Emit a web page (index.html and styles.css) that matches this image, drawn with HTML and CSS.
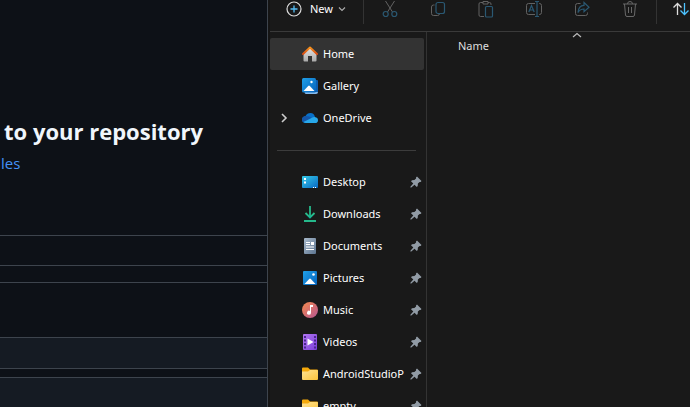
FILE: index.html
```html
<!DOCTYPE html>
<html lang="en">
<head>
<meta charset="utf-8">
<title>Upload files</title>
<link rel="stylesheet" href="styles.css">
</head>
<body>
<svg class="defs" aria-hidden="true">
  <defs>
    <linearGradient id="roof" x2="0" y2="1"><stop stop-color="#f7941d"/><stop offset="1" stop-color="#d84a12"/></linearGradient>
    <linearGradient id="wall" x2="0" y2="1"><stop stop-color="#e2e2e2"/><stop offset="1" stop-color="#a9a9a9"/></linearGradient>
    <linearGradient id="blue" x2="1" y2="1"><stop stop-color="#20a0e8"/><stop offset="1" stop-color="#0563bd"/></linearGradient>
    <linearGradient id="teal" x2="1" y2="1"><stop stop-color="#35cbe8"/><stop offset="1" stop-color="#0968c4"/></linearGradient>
    <linearGradient id="green" x2="0" y2="1"><stop stop-color="#2fbd85"/><stop offset="1" stop-color="#12b59b"/></linearGradient>
    <linearGradient id="paper" x2="1" y2="1"><stop stop-color="#a9bacb"/><stop offset="1" stop-color="#5d7591"/></linearGradient>
    <linearGradient id="music" x2="1" y2="1"><stop stop-color="#f58a4c"/><stop offset="1" stop-color="#b55594"/></linearGradient>
    <linearGradient id="video" x2="1" y2="1"><stop stop-color="#b276f3"/><stop offset="1" stop-color="#7b3fd6"/></linearGradient>
    <linearGradient id="folder" x2="1" y2="1"><stop stop-color="#ffe394"/><stop offset="1" stop-color="#fcc43a"/></linearGradient>
    <symbol id="pin" viewBox="0 0 12 12"><path fill="#919ba5" d="M7 .5 11.500 5 10.600 6 9.600 5.900 7.900 7.600 7.700 10 6.800 11 4.500 8.700 1.300 11.600.4 11.600.4 10.700 3.300 7.500 1 5.200 2 4.300 4.400 4.100 6.100 2.400 6 1.400Z"/></symbol>
    <symbol id="folder-icon" viewBox="0 0 16 16"><path fill="#f5a90b" d="M0 2.500Q0 1.500 1 1.500H6L8 3.500H15Q16 3.500 16 4.500V8H0Z"/><path fill="url(#folder)" d="M0 5.500H6L8 4H15Q16 4 16 5V13Q16 14 15 14H1Q0 14 0 13Z"/></symbol>
  </defs>
</svg>
<div class="desktop">
  <main class="upload">
    <section class="drop">
      <h1>to your repository</h1>
      <a href="#">les</a>
    </section>
    <div class="band"></div>
    <div class="band form"></div>
    <div class="band option"></div>
    <div class="band option last"></div>
  </main>
  <section class="explorer">
    <header class="toolbar">
      <button class="new"><svg width="16" height="16" viewBox="0 0 16 16" fill="none"><circle cx="8" cy="8" r="7" stroke="#ddd" stroke-width="1.200"/><path d="M8 4.500V11.500M4.500 8H11.500" stroke="#55bdf5" stroke-width="1.300"/></svg><span>New</span><svg width="8" height="8" viewBox="0 0 8 8" fill="none"><path d="M1 2.500 4 5.500 7 2.500" stroke="#aaa" stroke-width="1.200"/></svg></button>
      <span class="split"></span>
      <button class="tool" aria-label="Cut"><svg viewBox="0 0 16 18" fill="none"><path d="M3.500 1 10.500 12M12.500 1 5.500 12" stroke="#626262"/><circle cx="3.700" cy="14" r="2.500" stroke="#2a5872" stroke-width="1.200"/><circle cx="12.300" cy="14" r="2.500" stroke="#2a5872" stroke-width="1.200"/></svg></button>
      <button class="tool" aria-label="Copy"><svg viewBox="0 0 16 18" fill="none"><path d="M4.500 5H3.500Q1.500 5 1.500 7V13.500Q1.500 15.500 3.500 15.500H7.500Q9.500 15.500 9.500 13.500" stroke="#626262"/><rect x="6" y="2.500" width="8.500" height="11" rx="2" stroke="#2a5872" stroke-width="1.200"/></svg></button>
      <button class="tool" aria-label="Paste"><svg viewBox="0 0 16 18" fill="none"><path d="M5 2.500H2.500Q1 2.500 1 4V15Q1 16.500 2.500 16.500H6M10 2.500H11.500Q13 2.500 13 4V5M5 1.500H10V4H5Z" stroke="#626262"/><rect x="7.500" y="6.500" width="7" height="10.500" rx="1" stroke="#2a5872" stroke-width="1.200"/></svg></button>
      <button class="tool" aria-label="Rename"><svg viewBox="0 0 16 18" fill="none"><path d="M9 3.500H2.500Q.5 3.500.5 5.500V12.500Q.5 14.500 2.500 14.500H9M13 3.500H13.500Q15.500 3.500 15.500 5.500V12.500Q15.500 14.500 13.500 14.500H13" stroke="#626262"/><path d="M2.800 12 5.500 5.500 8.200 12M3.700 10H7.300M9 1.500H13M11 1.500V16.500M9 16.500H13" stroke="#2a5872" stroke-width="1.200"/></svg></button>
      <button class="tool" aria-label="Share"><svg viewBox="0 0 16 18" fill="none"><path d="M6.500 3.500H3.500Q1.500 3.500 1.500 5.500V13.500Q1.500 15.500 3.500 15.500H11.500Q13.500 15.500 13.500 13.500V12.500" stroke="#626262"/><path d="M10 2.500 15 7.200 10 11.700V9Q6 9 4 12.500 4.500 5.500 10 5.300Z" stroke="#2a5872" stroke-width="1.200"/></svg></button>
      <button class="tool" aria-label="Delete"><svg viewBox="0 0 16 18" fill="none"><path d="M1 4H15M5.500 4Q5.500 1.500 8 1.500T10.500 4M2.500 4 3.500 15Q3.700 16.500 5 16.500H11Q12.300 16.500 12.500 15L13.500 4M6.500 7V13M9.500 7V13" stroke="#686868"/></svg></button>
      <span class="split"></span>
      <button class="tool sort" aria-label="Sort"><svg viewBox="0 0 16 18" fill="none"><path d="M4.500 15V3.500M.5 7.500 4.500 3.500 8.500 7.500" stroke="#ddd" stroke-width="1.300"/><path d="M11.500 3V14.500M7.500 10.500 11.500 14.500 15.500 10.500" stroke="#4cc2ff" stroke-width="1.300"/></svg></button>
    </header>
    <div class="content">
      <nav class="side">
        <a class="row current" href="#"><svg class="icon" viewBox="0 0 16 16"><path fill="url(#wall)" d="M1.500 7.500 8 2 14.500 7.500V14.500Q14.500 15.500 13.500 15.500H10V10H6V15.500H2.500Q1.500 15.500 1.500 14.500Z"/><path fill="none" stroke="url(#roof)" stroke-width="2" stroke-linecap="round" stroke-linejoin="round" d="M1 8 8 1.500 15 8"/></svg><span>Home</span></a>
        <a class="row" href="#"><svg class="icon" viewBox="0 0 16 16"><path fill="#0d5eb0" d="M14 2H15Q16 2 16 3V14H14Z"/><path fill="#85b9ea" d="M2.500 14H16Q16 16 14 16H4Q2.500 16 2.500 14Z"/><rect width="14" height="14.500" rx="1.500" fill="url(#blue)"/><path fill="#fff" d="M1.500 13 6.200 8Q7 7.200 7.800 8L12.500 13Z"/><circle cx="9.500" cy="4" r="1.200" fill="#fff"/></svg><span>Gallery</span></a>
        <a class="row" href="#"><svg class="chevron" viewBox="0 0 8 10" fill="none"><path d="M2 1 6 5 2 9" stroke="#ccc" stroke-width="1.600"/></svg><svg class="icon" viewBox="0 0 16 16"><path fill="#0870c8" d="M4 13Q0 13 0 9.500 0 6.500 3.500 6 5 3 8.500 3 12 3 13 7L10 12Z"/><path fill="#1556a8" d="M3.500 6Q7 5.800 10 8L6 11 1 12Q0 11 0 9.500 0 6.500 3.500 6Z"/><path fill="#28a8ea" d="M1.500 12 8.500 8.500Q10.500 6.800 12.800 7 16 7.500 16 10.200 16 13 13 13H4Q2.500 13 1.500 12Z"/></svg><span>OneDrive</span></a>
        <hr>
        <a class="row" href="#"><svg class="icon" viewBox="0 0 16 16"><rect y="2" width="16" height="12" rx="1" fill="url(#teal)"/><path fill="#fff" d="M2 4H4V6H2ZM2 7.500H4V9.500H2ZM11 13H12V14H11ZM13 13H14V14H13Z"/></svg><span>Desktop</span><svg class="pin"><use href="#pin"/></svg></a>
        <a class="row" href="#"><svg class="icon" viewBox="0 0 16 16"><path fill="none" stroke="url(#green)" stroke-width="1.800" d="M3.500 7 8 11.500 12.500 7"/><path fill="#25b98b" d="M7.100 0H8.900V11H7.100ZM2 14H14V16H2Z"/></svg><span>Downloads</span><svg class="pin"><use href="#pin"/></svg></a>
        <a class="row" href="#"><svg class="icon" viewBox="0 0 16 16"><rect x="2" width="12" height="16" rx="1" fill="url(#paper)"/><path fill="#fff" d="M4 4H8V5H4ZM4 6H8V7H4ZM9 4H12V7H9ZM4 8.500H12V9.500H4ZM4 11H12V12H4Z"/></svg><span>Documents</span><svg class="pin"><use href="#pin"/></svg></a>
        <a class="row" href="#"><svg class="icon" viewBox="0 0 16 16"><rect x="1" y="1" width="14" height="14" rx="1" fill="url(#blue)"/><path fill="#fff" d="M2.500 14 7.200 9Q8 8.200 8.800 9L13.500 14Z"/><circle cx="11.500" cy="4.500" r="1.300" fill="#fff"/></svg><span>Pictures</span><svg class="pin"><use href="#pin"/></svg></a>
        <a class="row" href="#"><svg class="icon" viewBox="0 0 16 16"><circle cx="8" cy="8" r="8" fill="url(#music)"/><path fill="#fff" d="M8 3H11V5H9V10.500A2 2 0 1 1 8 9Z"/></svg><span>Music</span><svg class="pin"><use href="#pin"/></svg></a>
        <a class="row" href="#"><svg class="icon" viewBox="0 0 16 16"><rect x="1" width="14" height="16" rx="1" fill="url(#video)"/><path fill="#4b2790" d="M2 2H4V4H2ZM2 5.500H4V7.500H2ZM2 9H4V11H2ZM2 12.500H4V14.500H2ZM12 2H14V4H12ZM12 5.500H14V7.500H12ZM12 9H14V11H12ZM12 12.500H14V14.500H12Z"/><path fill="#fff" d="M5.500 4.500 11.500 8 5.500 11.500Z"/></svg><span>Videos</span><svg class="pin"><use href="#pin"/></svg></a>
        <a class="row" href="#"><svg class="icon"><use href="#folder-icon"/></svg><span>AndroidStudioP</span><svg class="pin"><use href="#pin"/></svg></a>
        <a class="row" href="#"><svg class="icon"><use href="#folder-icon"/></svg><span>empty</span><svg class="pin"><use href="#pin"/></svg></a>
      </nav>
      <div class="files">
        <svg class="caret" viewBox="0 0 10 6" fill="none"><path d="M1 5 5 1.500 9 5" stroke="#bbb" stroke-width="1.200"/></svg>
        <button class="column">Name</button>
      </div>
    </div>
  </section>
</div>
</body>
</html>
```
FILE: styles.css
```css
* {
  box-sizing: border-box;
}

body {
  margin: 0;
  overflow: hidden;
  background: #191919;
  color: #fff;
  font: 11px/16px "Noto Sans", "Open Sans", sans-serif;
}

a {
  color: inherit;
  text-decoration: none;
}

button {
  padding: 0;
  border: 0;
  background: none;
  color: inherit;
  font: inherit;
}

svg {
  display: block;
  flex: none;
}

.defs {
  position: absolute;
  width: 0;
  height: 0;
}

.desktop {
  display: grid;
  grid-template-columns: minmax(0, 268fr) minmax(0, 422fr);
  height: 100vh;
  overflow: hidden;
}

.upload {
  display: flex;
  flex-direction: column;
  border-right: 1px solid #3d444d;
  background: #0d1117;
}

.drop {
  flex: none;
  padding: 115px 0 60px 4px;
}

.drop h1 {
  margin: 0;
  color: #f0f6fc;
  font-family: "Open Sans", "Noto Sans", sans-serif;
  font-size: 22px;
  font-weight: 700;
  line-height: 32px;
  white-space: nowrap;
}

.drop a {
  display: block;
  margin-left: -4px;
  padding-left: 1px;
  color: #4493f8;
  font-family: "Open Sans", "Noto Sans", sans-serif;
  font-size: 15px;
  line-height: 32px;
  margin-bottom: -4px;
}

.band {
  flex: none;
  height: 31px;
  border: solid #3d444d;
  border-width: 1px 0;
}

.form {
  height: 55px;
  margin-top: 16px;
  border-bottom: 0;
}

.option {
  height: 32px;
  background: #151b23;
}

.last {
  flex: 1;
  margin-top: 8px;
  border-bottom: 0;
}

.explorer {
  display: flex;
  flex-direction: column;
  min-width: 0;
  min-height: 0;
  border-left: 2px solid #151515;
}

.toolbar {
  display: flex;
  flex: none;
  align-items: flex-start;
  height: 32px;
  overflow: hidden;
  border-bottom: 1px solid #3a3a3a;
}

.new {
  display: flex;
  flex: none;
  align-items: center;
  width: 93px;
  height: 18px;
  padding-left: 16px;
}

.new span {
  margin: 0 5px 0 8px;
}

.split {
  flex: none;
  width: 1px;
  height: 24px;
  margin-right: 2px;
  background: #333;
}

.tool {
  display: flex;
  flex: none;
  justify-content: center;
  width: 48px;
}

.tool + .split {
  margin-left: 2px;
}

.tool svg {
  width: 16px;
  height: 18px;
}

.sort {
  width: 44px;
}

.content {
  display: flex;
  flex: 1;
  min-height: 0;
}

.side {
  flex: none;
  width: 157px;
  padding: 6px 2px 0 0;
  overflow: hidden;
  border-right: 1px solid #333;
}

.row {
  display: grid;
  grid-template-columns: 27px 16px minmax(0, 1fr) 12px;
  column-gap: 5px;
  align-items: center;
  height: 32px;
  padding-right: 2px;
}

.row > span {
  grid-column: 3;
  white-space: nowrap;
}

.current {
  border-radius: 2px;
  background: #333;
}

.icon {
  grid-column: 2;
  width: 16px;
  height: 16px;
}

.chevron {
  justify-self: end;
  width: 8px;
  height: 10px;
  margin-right: 9px;
}

.pin {
  width: 12px;
  height: 12px;
}

hr {
  height: 1px;
  margin: 16px 8px 15px 7px;
  border: 0;
  background: #3c3c3c;
}

.files {
  flex: 1;
  min-width: 0;
}

.caret {
  width: 10px;
  height: 6px;
  margin-left: 55%;
}

.column {
  padding-left: 31px;
  color: #dedede;
}
```
